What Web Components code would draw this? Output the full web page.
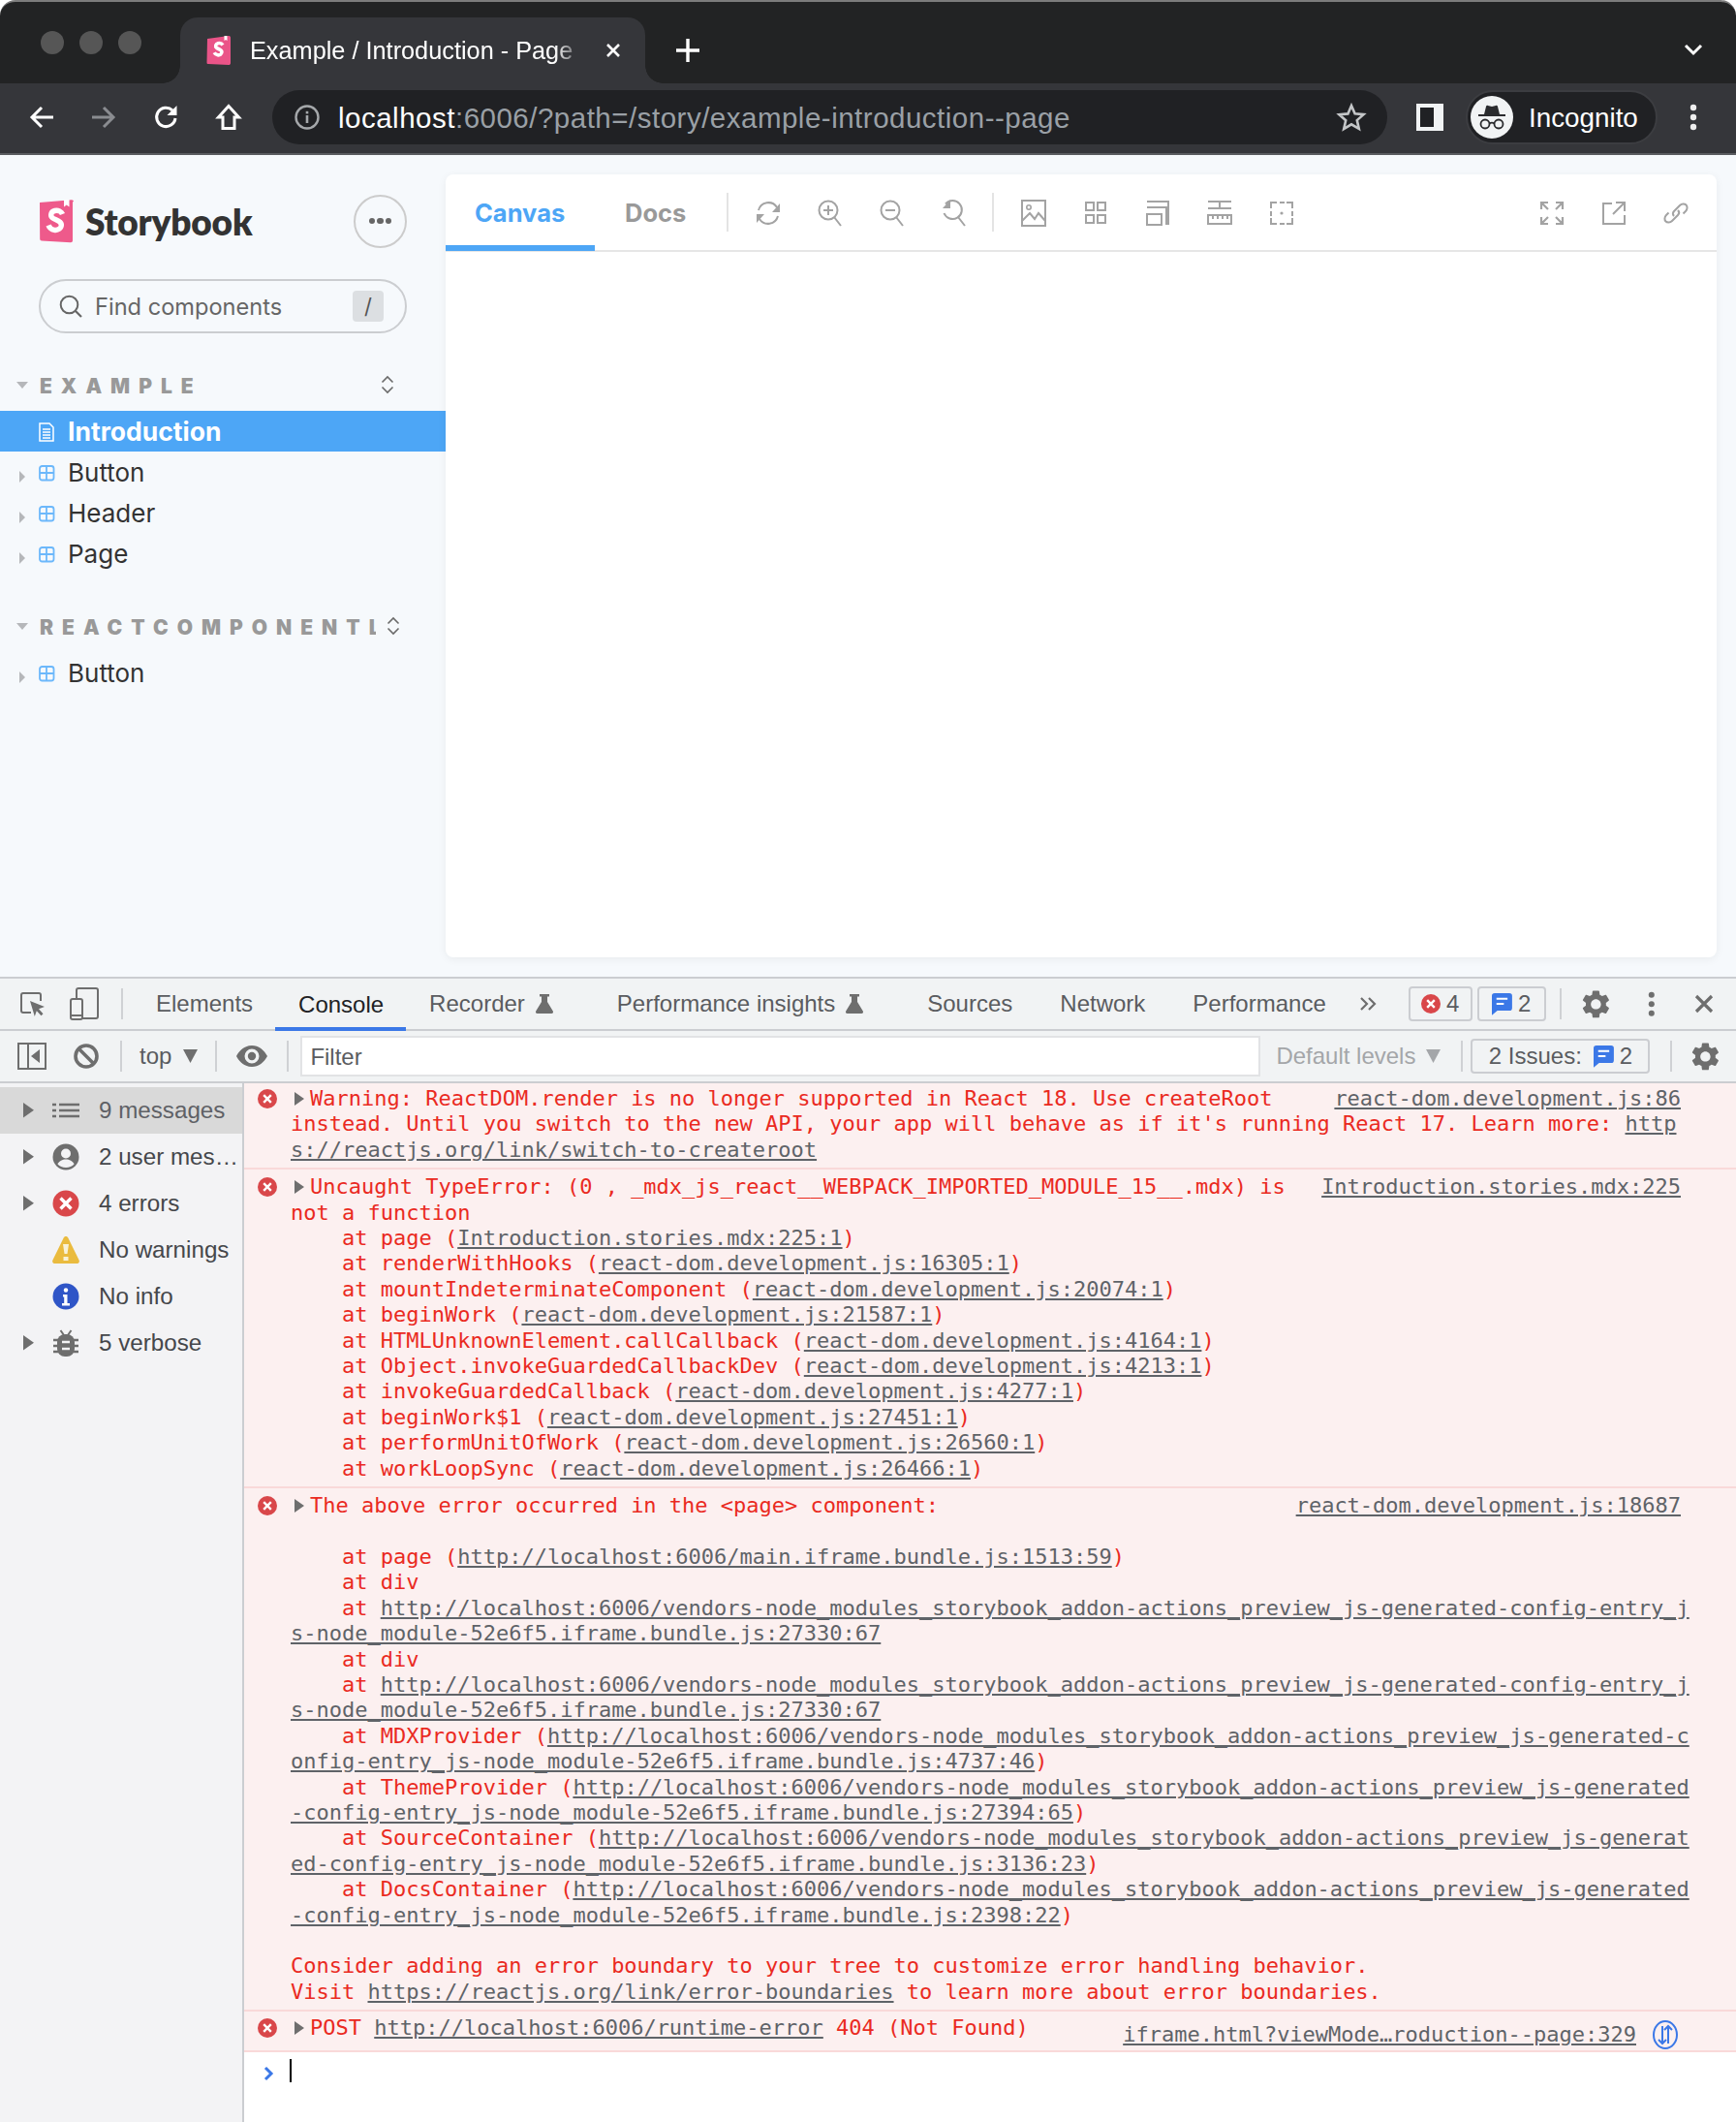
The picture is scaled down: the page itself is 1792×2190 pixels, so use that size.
<!DOCTYPE html>
<html lang="en"><head><meta charset="utf-8"><title>Example / Introduction - Page</title>
<style>
html,body{margin:0;padding:0;background:#fff}
body{width:1792px;height:2190px;overflow:hidden;font-family:"Liberation Sans",sans-serif}
</style></head>
<body>
<app-root></app-root>

<script>
const G='#6e6e6e', P='#a3a3a3';
const s=(d,c='currentColor',w=2)=>`<path d="${d}" fill="none" stroke="${c}" stroke-width="${w}"/>`;
const f=(d,c='currentColor')=>`<path d="${d}" fill="${c}"/>`;
const GEAR="M19.14 12.94c.04-.3.06-.61.06-.94 0-.32-.02-.64-.07-.94l2.03-1.58c.18-.14.23-.41.12-.61l-1.92-3.32c-.12-.22-.37-.29-.59-.22l-2.39.96c-.5-.38-1.03-.7-1.62-.94l-.36-2.54c-.04-.24-.24-.41-.48-.41h-3.84c-.24 0-.43.17-.47.41l-.36 2.54c-.59.24-1.13.57-1.62.94l-2.39-.96c-.22-.08-.47 0-.59.22L2.74 8.87c-.12.21-.08.47.12.61l2.03 1.58c-.05.3-.09.63-.09.94s.02.64.07.94l-2.03 1.58c-.18.14-.23.41-.12.61l1.92 3.32c.12.22.37.29.59.22l2.39-.96c.5.38 1.03.7 1.62.94l.36 2.54c.05.24.24.41.48.41h3.84c.24 0 .44-.17.47-.41l.36-2.54c.59-.24 1.13-.56 1.62-.94l2.39.96c.22.08.47 0 .59-.22l1.92-3.32c.12-.22.07-.47-.12-.61l-2.01-1.58zM12 15.6c-1.98 0-3.6-1.62-3.6-3.6s1.62-3.6 3.6-3.6 3.6 1.62 3.6 3.6-1.62 3.6-3.6 3.6z";
const ICONS={
 back:[26,24,s("M25 12H4M13 2L3 12l10 10",'currentColor',3)],
 forward:[26,24,s("M1 12h21M13 2l10 10-10 10",'currentColor',3)],
 reload:[26,26,s("M22 14a9.7 9.7 0 1 1-3-8.2",'currentColor',3)+f("M23.5 1v10h-10z")],
 home:[26,28,s("M13 2.5L23.5 14H19v11.5H7V14H2.5z",'currentColor',3)],
 info:[26,26,`<circle cx="13" cy="13" r="11.5" fill="none" stroke="currentColor" stroke-width="2.4"/><rect x="11.7" y="11" width="2.6" height="8" fill="currentColor"/><rect x="11.7" y="6.8" width="2.6" height="2.6" fill="currentColor"/>`],
 star:[30,30,s("M15 3l3.6 8.3 9 .8-6.8 6 2 8.8L15 22.3 7.2 27l2-8.8-6.8-6 9-.8z",'currentColor',2.6)],
 panel:[28,28,`<rect width="28" height="28" fill="#f1f3f4"/><rect x="4" y="4" width="14" height="20" fill="#202124"/>`],
 incog:[44,44,`<circle cx="22" cy="22" r="22" fill="#f1f3f4"/><path d="M14 19l2-8c.2-1 1-1.4 2-1l4 1 4-1c1-.4 1.800 0 2 1l2 8z" fill="#2a2b2e"/><rect x="8" y="19" width="28" height="2" fill="#2a2b2e"/><circle cx="15" cy="29" r="4.500" fill="none" stroke="#2a2b2e" stroke-width="1.800"/><circle cx="29" cy="29" r="4.500" fill="none" stroke="#2a2b2e" stroke-width="1.800"/><path d="M19.500 28.500c1.500-1 3.500-1 5 0" fill="none" stroke="#2a2b2e" stroke-width="1.800"/>`],
 kebab:[8,28,`<circle cx="4" cy="4" r="3.200" fill="currentColor"/><circle cx="4" cy="14" r="3.200" fill="currentColor"/><circle cx="4" cy="24" r="3.200" fill="currentColor"/>`],
 chev:[20,12,s("M2 2l8 8 8-8",'currentColor',3)],
 plus:[24,24,s("M12 0v24M0 12h24",'currentColor',3.400)],
 tabx:[16,16,s("M2 2l12 12M14 2L2 14",'currentColor',2.600)],
 favicon:[25,30,`<path d="M1 3l22-3c1 0 2 .5 2 2v26c0 1.500-1 2-2 2L2 29c-1 0-1.500-.5-1.500-1.500z" fill="#ea5488"/>`+s("M17 9.500c-1-1.600-3-2.300-5-1.800-2.400.6-3.200 3.200-1.400 4.700 1.600 1.300 4.800 1.500 5.300 4 .4 2.300-2 3.800-4.200 3.400-1.700-.3-2.800-1.200-3.500-2.600",'#fff',3.600)+`<path d="M18.500 0h3v5l-1.500-1-1.500 1z" fill="#fff"/>`],
 logo:[36,44,`<path d="M1 3L34 .2c1 0 2 .8 2 2l-1 0v40c0 1-.8 2-2 2L3 42.500c-1 0-1.800-.8-1.800-2z" fill="#ee5a8b"/>`+s("M24.500 15c-1-2.800-4.500-4.300-8-3.500-4 1-5 5.300-2.200 7.500 2.600 2.100 8.400 2.400 9 6.500.5 4-3.500 6.500-7.300 5.800-3-.5-5-2.300-6-4.800",'#fff',5.400)+`<path d="M26 0h5.500v7.500L28.700 5.500 26 7.500z" fill="#fff"/>`],
 search:[24,24,`<circle cx="10.500" cy="10.500" r="8.800" fill="none" stroke="currentColor" stroke-width="2"/>`+s("M17 17l6 6",'currentColor',2.200)],
 sort:[14,20,s("M1.500 7.500L7 2l5.500 5.500M1.500 12.500L7 18l5.500-5.500",'currentColor',1.600)],
 caretd:[12,7,f("M0 0h12L6 7z")],
 caretr:[6,12,f("M0 0l6 6-6 6z")],
 tri:[10,14,f("M0 0l10 7-10 7z")],
 doc:[16,20,s("M1 1h10l4 4v14H1z",'currentColor',1.500)+s("M4 7h8M4 10h8M4 13h8M4 16h8",'currentColor',1.500)],
 comp:[16,16,`<rect x="1" y="1" width="14.500" height="14.500" rx="2.500" fill="none" stroke="currentColor" stroke-width="1.800"/>`+s("M8 1v14M1 8h14",'currentColor',1.800)],
 sync:[26,28,s("M3 11a10.500 10.500 0 0 1 19-3M23 17a10.500 10.500 0 0 1-19 3",'currentColor',2)+f("M25 4v9h-8zM1 24v-9h8z")],
 zoomin:[26,28,`<circle cx="11" cy="11" r="9.500" fill="none" stroke="currentColor" stroke-width="2"/>`+s("M17 18l7 9M6 11h10M11 6v10",'currentColor',2)],
 zoomout:[26,28,`<circle cx="11" cy="11" r="9.500" fill="none" stroke="currentColor" stroke-width="2"/>`+s("M17 18l7 9M6 11h10",'currentColor',2)],
 zoomre:[26,28,s("M4 4.500A9.500 9.500 0 1 1 2.500 14M17 18l7 9",'currentColor',2)+f("M9 0v9H1z")],
 img:[26,28,s("M1 1h24v26H1z",'currentColor',2)+`<circle cx="8" cy="8" r="2.200" fill="none" stroke="currentColor" stroke-width="1.600"/>`+s("M1 22l8-8 5 6 4-6 7 8",'currentColor',2)],
 grid:[22,24,s("M1 1h8v8H1zM13 1h8v8h-8zM1 14h8v8H1zM13 14h8v8h-8z",'currentColor',2)],
 outline:[24,26,s("M1 14h15v11H1zM1 7h20v18M1 1h22v24",'currentColor',2)],
 ruler:[26,26,s("M1 1h24M1 8h24M13 1v7",'currentColor',2)+s("M1 15h24v9H1z",'currentColor',2)+s("M6 15v4M11 15v4M16 15v4M21 15v4",'currentColor',2)],
 dashed:[24,24,s("M1 7V1h6M10 1h5M17 1h6v6M23 10v5M23 17v6h-6M15 23h-5M7 23H1v-6M1 15v-5",'currentColor',2)+`<circle cx="12" cy="12" r="1.600" fill="currentColor"/>`],
 expand:[24,24,s("M1 8V1h7M23 8V1h-7M1 16v7h7M23 16v7h-7M2 2l6 6M22 2l-6 6M2 22l6-6M22 22l-6-6",'currentColor',2.200)],
 open:[24,24,s("M10 2H1v21h22v-9M14 1h9v9M23 1L11 13",'currentColor',2)],
 link:[26,26,s("M11 16c-1.500-1.500-1.500-3.500 0-5l6-6c2-2 5-2 6.500-.5s1.500 4.500-.5 6.500l-2.500 2.500M15 10c1.500 1.500 1.500 3.500 0 5l-6 6c-2 2-5 2-6.500.5S1 17 3 15l2.500-2.500",'currentColor',2)],
 inspect:[26,26,s("M12 22H4a2 2 0 0 1-2-2V4a2 2 0 0 1 2-2h16a2 2 0 0 1 2 2v6",'currentColor',2)+f("M11 10l15 6-6 2.200 4.500 5-2 2-4.700-5-2 5.800z")],
 device:[30,34,`<rect x="7" y="1" width="22" height="31" rx="2" fill="none" stroke="currentColor" stroke-width="2"/><rect x="1" y="12" width="12" height="21" rx="2" fill="#f1f3f4" stroke="currentColor" stroke-width="2"/><path d="M1 29h12" stroke="currentColor" stroke-width="2"/>`],
 flask:[18,20,f("M4 0h10v2.500h-2V8l5.800 9.500c.6 1.200 0 2.500-1.500 2.500H1.700C.2 20-.4 18.700.2 17.500L6 8V2.500H4z")],
 more:[18,16,s("M2 2l6 6-6 6M10 2l6 6-6 6",'currentColor',2.200)],
 gear:[24,24,f(GEAR)],
 close:[20,20,s("M2 2l16 16M18 2L2 18",'currentColor',3.200)],
 err:[20,20,`<circle cx="10" cy="10" r="10" fill="#d9474a"/>`+s("M6.200 6.200l7.600 7.600M13.800 6.200l-7.600 7.600",'#fff',2.400)],
 errbig:[28,28,`<circle cx="14" cy="14" r="13.500" fill="#d9474a"/>`+s("M8.500 8.500l11 11M19.500 8.500l-11 11",'#fff',3.400)],
 issue:[22,24,`<path d="M3 0h16a3 3 0 0 1 3 3v13a3 3 0 0 1-3 3H6l-6 5V3a3 3 0 0 1 3-3z" fill="#3b78e7"/><path d="M5 6h12M5 11.500h8" stroke="#fff" stroke-width="2.200"/>`],
 sidebar:[30,28,s("M1 1h28v26H1zM11 1v26",'currentColor',2)+f("M23 7v14L14 14z")],
 block:[26,26,`<circle cx="13" cy="13" r="11" fill="none" stroke="currentColor" stroke-width="3.600"/>`+s("M5.500 5.500l15 15",'currentColor',3.600)],
 eye:[32,22,f("M16 0C9 0 3.500 4.500 0 11c3.500 6.500 9 11 16 11s12.500-4.500 16-11C28.500 4.500 23 0 16 0zm0 18.500a7.500 7.500 0 1 1 0-15 7.500 7.500 0 0 1 0 15z")+`<circle cx="16" cy="11" r="4.200" fill="currentColor"/>`],
 down:[15,14,f("M0 0h15L7.500 14z")],
 list:[28,16,s("M0 2h4M7 2h21M0 8h4M7 8h21M0 14h4M7 14h21",'currentColor',2.600)],
 user:[28,28,`<circle cx="14" cy="14" r="13.500" fill="currentColor"/><circle cx="14" cy="10.500" r="5" fill="#f3f3f5"/><path d="M5.500 21.500c1.500-3.500 5-5 8.500-5s7 1.500 8.500 5c-2 2.300-5 3.500-8.500 3.500s-6.500-1.200-8.500-3.500z" fill="#f3f3f5"/>`],
 warn:[28,28,`<path d="M14 0c1 0 1.800.5 2.300 1.500l11.300 23c.8 1.600 0 3.500-2 3.500H2.400c-2 0-2.800-1.900-2-3.500l11.300-23C12.200.5 13 0 14 0z" fill="#eabb3f"/><path d="M11 8h6l-1.500 10h-3zM11.500 21h5v4h-5z" fill="#f8f1d8"/>`],
 infob:[28,28,`<circle cx="14" cy="14" r="13.500" fill="#2f55c7"/><path d="M11 12h4.500v9H18v2.500h-8V21h2.200v-6.500H11z" fill="#fff"/><circle cx="14" cy="7.500" r="2.200" fill="#fff"/>`],
 bug:[26,28,s("M7.500 1l3.500 5M18.500 1L15 6",'currentColor',2)+`<rect x="4" y="5" width="18" height="23" rx="8" fill="currentColor"/><path d="M0 11h26M0 17h26M0 23h26" stroke="currentColor" stroke-width="2.400"/><path d="M9 13h8M9 20h8" stroke="#f3f3f5" stroke-width="2.400"/>`],
 net:[26,30,`<ellipse cx="13" cy="15" rx="12" ry="14" fill="none" stroke="#3b78e7" stroke-width="2"/>`+s("M10 6v18M6 20l4 4 4-4M16 24V6M12 10l4-4 4 4",'#3b78e7',2)],
 prompt:[12,16,s("M2 2l6 6-6 6",'#3b78e7',3)]
};
function def(name,css,html){
  customElements.define(name,class extends HTMLElement{
    constructor(){super();this.attachShadow({mode:'open'});}
    connectedCallback(){
      if(this._done)return;this._done=1;
      const t=document.createElement('template');
      t.innerHTML=`<style>${css}</style>`+(typeof html==='function'?html(this):html);
      this.shadowRoot.appendChild(t.content);
    }
  });
}
customElements.define('x-icon',class extends HTMLElement{
  connectedCallback(){
    if(this.shadowRoot)return;
    const r=this.attachShadow({mode:'open'});
    const [w,h,b]=ICONS[this.getAttribute('name')];
    const sc=parseFloat(this.getAttribute('scale')||1);
    r.innerHTML=`<style>:host{display:inline-flex;flex:none;line-height:0}svg{display:block;overflow:visible}</style><svg width="${w*sc}" height="${h*sc}" viewBox="0 0 ${w} ${h}">${b}</svg>`;
  }
});
def('src-link',`:host{display:inline;color:#5f6368;text-decoration:underline}`,`<slot></slot>`);

/* ---------- browser chrome ---------- */
def('browser-chrome',`
:host{display:block;height:160px;font-family:"Liberation Sans",sans-serif;color:#fff}
.tabs{height:86px;box-sizing:border-box;background:#222324;border-top:2px solid #7c7c7c;border-radius:16px 16px 0 0;display:flex;align-items:flex-end;padding-left:42px}
.dots{display:flex;gap:16px;align-self:flex-start;margin-top:30px}
.dots i{width:24px;height:24px;border-radius:50%;background:#565656}
.tab{position:relative;margin-left:40px;width:480px;height:68px;background:#35363a;border-radius:18px 18px 0 0;display:flex;align-items:center;padding-left:27px;box-sizing:border-box}
.tab:before,.tab:after{content:"";position:absolute;bottom:0;width:18px;height:18px}
.tab:before{left:-18px;background:radial-gradient(circle at 0 0,#222324 17.5px,#35363a 18px)}
.tab:after{right:-18px;background:radial-gradient(circle at 100% 0,#222324 17.5px,#35363a 18px)}
.title{margin-left:20px;width:350px;font-size:25.300px;white-space:nowrap;overflow:hidden;-webkit-mask-image:linear-gradient(90deg,#000 90%,transparent 98%);mask-image:linear-gradient(90deg,#000 90%,transparent 98%)}
.tabx{margin-left:17px}
.plus{margin-left:32px;margin-bottom:22px}
.end{margin-left:auto;margin-right:34px;margin-bottom:29px}
.bar{height:74px;box-sizing:border-box;background:#35363a;border-bottom:2px solid #595b5f;display:flex;align-items:center;padding-left:11px;padding-bottom:2px}
.btn{width:64px;display:flex;justify-content:center;align-items:center}
.omni{margin-left:14px;width:1151px;height:56px;box-sizing:border-box;background:#202124;border-radius:28px;display:flex;align-items:center;padding-left:23px;padding-right:22px;font-size:29.500px;letter-spacing:.5px;color:#9aa0a6;white-space:nowrap}
.omni b{font-weight:400;color:#fff}
.url{margin-left:19px;flex:1;padding-top:2px}
.panel{margin-left:30px}
.pill{margin-left:23px;width:198px;height:56px;box-sizing:border-box;background:#202124;border:2px solid #3c3d41;border-radius:28px;display:flex;align-items:center;padding-left:3px;font-size:27.800px}
.pill span{margin-left:16px;padding-top:2px}
.keb{margin-left:33px}
`,`
<div class="tabs">
 <div class="dots"><i></i><i></i><i></i></div>
 <div class="tab"><x-icon name="favicon"></x-icon><div class="title">Example / Introduction - Page</div><x-icon class="tabx" name="tabx"></x-icon></div>
 <x-icon class="plus" name="plus"></x-icon>
 <x-icon class="end" name="chev"></x-icon>
</div>
<div class="bar">
 <div class="btn"><x-icon name="back"></x-icon></div>
 <div class="btn" style="color:#8a8c90"><x-icon name="forward"></x-icon></div>
 <div class="btn" style="padding-left:2px;box-sizing:border-box"><x-icon name="reload"></x-icon></div>
 <div class="btn" style="padding-left:2px;box-sizing:border-box"><x-icon name="home"></x-icon></div>
 <div class="omni"><x-icon name="info" style="color:#a5a8ab"></x-icon><div class="url"><b>localhost</b>:6006/?path=/story/example-introduction--page</div><x-icon name="star" style="color:#c4c6c8"></x-icon></div>
 <x-icon class="panel" name="panel"></x-icon>
 <div class="pill"><x-icon name="incog"></x-icon><span>Incognito</span></div>
 <x-icon class="keb" name="kebab" style="color:#eee"></x-icon>
</div>`);

/* ---------- storybook sidebar ---------- */
def('sb-group',`
:host{display:block;margin-top:var(--gap,0);color:#999;font-family:Inter,sans-serif}
.h{height:42px;margin-bottom:6px;display:flex;align-items:center;padding-left:17px}
.l{width:347px;margin-left:12px;overflow:hidden;white-space:nowrap;font-size:21px;font-weight:900;letter-spacing:var(--ls,9px);flex:none;padding-top:2px}
.s{margin-left:var(--sm,5px);color:#6a6a6a}
`,h=>`<div class="h"><x-icon name="caretd" style="color:#b5b7ba"></x-icon><div class="l">${h.getAttribute('label')}</div><x-icon class="s" name="sort"></x-icon></div><slot></slot>`);
def('sb-item',`
:host{display:flex;height:42px;align-items:center;padding-left:20px;font:400 26px Inter,sans-serif;color:#333;--c:#6cb8fb}
:host([selected]){background:#4da6f6;color:#fff;font-weight:700;font-size:26.500px;--c:#fff}
.t{width:20px;color:#b5b7ba;margin-top:2px}
.i{width:30px;color:var(--c);display:flex;margin-top:2px}
`,h=>`<div class="t">${h.hasAttribute('selected')?'':'<x-icon name="caretr"></x-icon>'}</div><div class="i"><x-icon name="${h.getAttribute('icon')||'comp'}"></x-icon></div><slot></slot>`);
def('sb-sidebar',`
:host{display:block;width:460px;flex:none;box-sizing:border-box;padding-top:41px;font-family:Inter,sans-serif}
.head{display:flex;align-items:center;justify-content:space-between;margin:0 40px;height:54px}
.brand{display:flex;align-items:center;gap:12px;font:800 37px Lato,sans-serif;color:#333;letter-spacing:-.2px}
.menu{width:55px;height:55px;box-sizing:border-box;border:2px solid #ccc;border-radius:50%;display:flex;align-items:center;justify-content:center;gap:2px}
.menu i{width:6.500px;height:6.500px;border-radius:50%;background:#666}
.search{margin:33px 40px 32px;height:56px;box-sizing:border-box;border:2px solid #cbcdd0;border-radius:28px;display:flex;align-items:center;padding:0 22px 0 19px;color:#666;font-size:23.600px}
.search span{margin-left:13px;flex:1}
.key{width:32px;height:32px;background:#dcdfe2;border-radius:4px;text-align:center;line-height:32px;font-size:22px;color:#555}
`,`
<div class="head"><div class="brand"><x-icon name="logo"></x-icon><span>Storybook</span></div><div class="menu"><i></i><i></i><i></i></div></div>
<div class="search"><x-icon name="search"></x-icon><span>Find components</span><div class="key">/</div></div>
<sb-group label="EXAMPLE">
 <sb-item selected icon="doc">Introduction</sb-item>
 <sb-item>Button</sb-item><sb-item>Header</sb-item><sb-item>Page</sb-item>
</sb-group>
<sb-group label="REACTCOMPONENTLIBRARY" style="--gap:33px;--sm:11px"><sb-item>Button</sb-item></sb-group>`);

/* ---------- storybook preview ---------- */
def('sb-preview',`
:host{display:block;flex:1;margin:20px 20px 20px 0;background:#fff;border-radius:8px;box-shadow:0 2px 10px rgba(0,0,0,.06);font-family:Inter,sans-serif;overflow:hidden}
.bar{height:80px;box-sizing:border-box;border-bottom:2px solid #e6e6e6;display:flex;align-items:center;padding-right:10px;padding-top:2px;color:${P}}
.tab{height:80px;margin-top:-2px;box-sizing:border-box;padding:0 30px;display:flex;align-items:center;font-size:25.500px;font-weight:700;color:#999}
.tab.on{color:#4da6f6;border-bottom:6px solid #4da6f6;padding-top:6px;width:154px}
.tab.d{padding-left:31px;padding-right:28px}
.sep{width:2px;height:40px;background:#e4e4e4;flex:none;margin-top:-2px}
.b{width:64px;display:flex;justify-content:center;flex:none}
.sp{margin-left:auto}
`,`
<div class="bar">
 <div class="tab on">Canvas</div><div class="tab d">Docs</div>
 <div class="sep" style="margin-left:14px;margin-right:9px"></div>
 <div class="b"><x-icon name="sync"></x-icon></div><div class="b"><x-icon name="zoomin"></x-icon></div><div class="b"><x-icon name="zoomout"></x-icon></div><div class="b"><x-icon name="zoomre"></x-icon></div>
 <div class="sep" style="margin-left:7px;margin-right:9px"></div>
 <div class="b"><x-icon name="img"></x-icon></div><div class="b"><x-icon name="grid"></x-icon></div><div class="b"><x-icon name="outline"></x-icon></div><div class="b"><x-icon name="ruler"></x-icon></div><div class="b"><x-icon name="dashed"></x-icon></div>
 <div class="b sp"><x-icon name="expand"></x-icon></div><div class="b"><x-icon name="open"></x-icon></div><div class="b"><x-icon name="link"></x-icon></div>
</div>`);
def('sb-layout',`:host{display:flex;height:848px;background:#f6f9fc}`,`<sb-sidebar></sb-sidebar><sb-preview></sb-preview>`);

/* ---------- devtools ---------- */
def('dt-tabs',`
:host{display:flex;height:56px;box-sizing:border-box;background:#f1f3f4;border-top:2px solid #cbcdd1;border-bottom:2px solid #cbcdd1;align-items:center;font-size:24px;color:#5a5c60;white-space:nowrap}
.tab{height:52px;box-sizing:border-box;padding:0 24px;display:flex;align-items:center;gap:11px}
.on{color:#202124;border-bottom:4px solid #3b78e7;padding-top:4px;margin-bottom:-2px;height:54px}
.sep{width:2px;height:32px;background:#cfd1d4;margin-left:23px;margin-right:10px}
.pad{margin-right:18px}
.cnt{height:36px;box-sizing:border-box;border:2px solid #cbcdd1;border-radius:4px;display:flex;align-items:center;gap:6px;justify-content:center}
`,`
<x-icon name="inspect" style="margin-left:20px;color:${G}"></x-icon>
<x-icon name="device" style="margin-left:26px;color:${G}"></x-icon>
<div class="sep"></div>
<div class="tab" style="padding-right:23px">Elements</div><div class="tab on" style="padding-right:23px">Console</div>
<div class="tab pad">Recorder<x-icon name="flask" style="color:${G}"></x-icon></div>
<div class="tab pad">Performance insights<x-icon name="flask" style="color:${G}"></x-icon></div>
<div class="tab" style="padding-right:25px">Sources</div><div class="tab" style="padding-right:25px">Network</div><div class="tab">Performance</div>
<x-icon name="more" style="margin-left:10px;color:${G}"></x-icon>
<div class="cnt" style="width:66px;margin-left:33px"><x-icon name="err"></x-icon>4</div>
<div class="cnt" style="width:71px;margin-left:5px"><x-icon name="issue" scale=".95"></x-icon>2</div>
<div class="sep" style="margin-left:14px;margin-right:18px"></div>
<x-icon name="gear" scale="1.450" style="color:${G}"></x-icon>
<x-icon name="kebab" scale=".95" style="margin-left:36px;color:${G}"></x-icon>
<x-icon name="close" style="margin-left:41px;color:${G}"></x-icon>`);
def('dt-toolbar',`
:host{display:flex;height:54px;box-sizing:border-box;background:#f1f3f4;border-bottom:2px solid #cbcdd1;align-items:center;font-size:24px;color:#5a5c60;white-space:nowrap}
.sep{width:2px;height:32px;background:#cfd1d4;flex:none}
.filter{width:991px;height:42px;box-sizing:border-box;background:#fff;border:2px solid #e2e3e5;padding-left:8px;line-height:40px;margin-left:12px}
.lv{color:#a4a6a9;margin-left:16px;display:flex;align-items:center;gap:11px}
.iss{width:185px;height:36px;box-sizing:border-box;border:2px solid #cbcdd1;border-radius:4px;display:flex;align-items:center;justify-content:center;gap:6px;margin-left:8px}
`,`
<x-icon name="sidebar" style="margin-left:18px;color:${G}"></x-icon>
<x-icon name="block" style="margin-left:28px;color:${G}"></x-icon>
<div class="sep" style="margin-left:22px;margin-right:18px"></div>
<span>top</span><x-icon name="down" style="margin-left:12px;color:${G}"></x-icon>
<div class="sep" style="margin-left:18px;margin-right:20px"></div>
<x-icon name="eye" style="color:${G}"></x-icon>
<div class="sep" style="margin-left:20px"></div>
<div class="filter">Filter</div>
<div class="lv">Default levels<x-icon name="down" style="color:#a4a6a9"></x-icon></div>
<div class="sep" style="margin-left:21px"></div>
<div class="iss">2 Issues:<x-icon name="issue" scale=".95" style="margin-left:6px"></x-icon>2</div>
<div class="sep" style="margin-left:21px;margin-right:17px"></div>
<x-icon name="gear" scale="1.450" style="color:${G}"></x-icon>`);
def('cons-filter',`
:host{display:flex;height:48px;align-items:center;font-size:24.200px;color:#45474b;white-space:nowrap;overflow:hidden}
:host([selected]){background:#d9d9d9;color:#5f6166}
.t{width:24px;margin-left:24px;color:${G};display:flex}
.i{width:28px;margin-left:6px;display:flex;justify-content:center;color:${G}}
.x{margin-left:20px}
`,h=>`<div class="t">${h.hasAttribute('exp')?'<x-icon name="tri" scale="1.100"></x-icon>':''}</div><div class="i"><x-icon name="${h.getAttribute('icon')}"></x-icon></div><div class="x"><slot></slot></div>`);
def('dt-sidebar',`:host{display:block;width:250px;flex:none;box-sizing:border-box;padding-top:4px;background:#f3f3f5}`,`
<cons-filter exp selected icon="list">9 messages</cons-filter>
<cons-filter exp icon="user">2 user mes…</cons-filter>
<cons-filter exp icon="errbig">4 errors</cons-filter>
<cons-filter icon="warn">No warnings</cons-filter>
<cons-filter icon="infob">No info</cons-filter>
<cons-filter exp icon="bug">5 verbose</cons-filter>`);
/* one console line; the first line of a message carries the expander and the source link */
def('c-l',`
:host{display:block;white-space:pre;min-height:26.400px}
.tr{display:inline-block;width:20px;color:${G}}
.src{float:right;margin-right:57px;color:#5f6368;text-decoration:underline}
`,h=>(h.getAttribute('src')?`<span class="src">${h.getAttribute('src')}</span>`:'')+(h.hasAttribute('first')?`<span class="tr"><x-icon name="tri" style="margin-left:4px"></x-icon></span>`:'')+`<slot></slot>`);
def('console-msg',`
:host{display:flex;background:#fcf0f0;border-bottom:2px solid #f9d9d9;color:#ea2a1f;font:22px/26.400px "DejaVu Sans Mono",monospace;box-sizing:border-box;padding:5px 0 5px 14px}
:host([top]){padding-top:3px}
.e{width:34px;flex:none;padding-top:3px}
.c{flex:1;min-width:0}
`,`<div class="e"><x-icon name="err"></x-icon></div><div class="c"><slot></slot></div>`);
def('console-post',`
:host{display:flex;height:42px;box-sizing:border-box;background:#fcf0f0;border-bottom:2px solid #f9d9d9;color:#ea2a1f;font:22px/26.400px "DejaVu Sans Mono",monospace;padding-left:14px;white-space:pre}
.e{width:34px;flex:none;padding-top:7px}
.tr{display:inline-block;width:20px}
.m{padding-top:4px;flex:1}
.src{color:#5f6368;text-decoration:underline;padding-top:11px}
.n{margin:9px 60px 0 17px}
`,`<div class="e"><x-icon name="err"></x-icon></div><div class="m"><span class="tr"><x-icon name="tri" style="margin-left:4px;color:${G}"></x-icon></span><slot></slot></div><div class="src">iframe.html?viewMode…roduction--page:329</div><x-icon class="n" name="net"></x-icon>`);
def('console-prompt',`
:host{display:flex;padding:10px 0 0 20px;align-items:flex-start}
.c{width:2px;height:24px;background:#000;margin-left:15px;margin-top:-3px}
`,`<x-icon name="prompt" style="margin-top:4px"></x-icon><div class="c"></div>`);
def('dev-tools',`
:host{display:block;height:1182px;background:#fff}
.body{display:flex;height:1072px}
.main{flex:1;min-width:0;border-left:2px solid #cbcdd1}
`,`<dt-tabs></dt-tabs><dt-toolbar></dt-toolbar>
<div class="body"><dt-sidebar></dt-sidebar><div class="main"><slot></slot></div></div>`);
def('app-root',`:host{display:block;width:1792px;height:2190px}`,`
<browser-chrome></browser-chrome><sb-layout></sb-layout>
<dev-tools>
<console-msg top>
<c-l first src="react-dom.development.js:86">Warning: ReactDOM.render is no longer supported in React 18. Use createRoot</c-l>
<c-l>instead. Until you switch to the new API, your app will behave as if it's running React 17. Learn more: <src-link>http</src-link></c-l>
<c-l><src-link>s://reactjs.org/link/switch-to-createroot</src-link></c-l>
</console-msg>
<console-msg>
<c-l first src="Introduction.stories.mdx:225">Uncaught TypeError: (0 , _mdx_js_react__WEBPACK_IMPORTED_MODULE_15__.mdx) is</c-l>
<c-l>not a function</c-l>
<c-l>    at page (<src-link>Introduction.stories.mdx:225:1</src-link>)</c-l>
<c-l>    at renderWithHooks (<src-link>react-dom.development.js:16305:1</src-link>)</c-l>
<c-l>    at mountIndeterminateComponent (<src-link>react-dom.development.js:20074:1</src-link>)</c-l>
<c-l>    at beginWork (<src-link>react-dom.development.js:21587:1</src-link>)</c-l>
<c-l>    at HTMLUnknownElement.callCallback (<src-link>react-dom.development.js:4164:1</src-link>)</c-l>
<c-l>    at Object.invokeGuardedCallbackDev (<src-link>react-dom.development.js:4213:1</src-link>)</c-l>
<c-l>    at invokeGuardedCallback (<src-link>react-dom.development.js:4277:1</src-link>)</c-l>
<c-l>    at beginWork$1 (<src-link>react-dom.development.js:27451:1</src-link>)</c-l>
<c-l>    at performUnitOfWork (<src-link>react-dom.development.js:26560:1</src-link>)</c-l>
<c-l>    at workLoopSync (<src-link>react-dom.development.js:26466:1</src-link>)</c-l>
</console-msg>
<console-msg>
<c-l first src="react-dom.development.js:18687">The above error occurred in the &lt;page&gt; component:</c-l>
<c-l></c-l>
<c-l>    at page (<src-link>http://localhost:6006/main.iframe.bundle.js:1513:59</src-link>)</c-l>
<c-l>    at div</c-l>
<c-l>    at <src-link>http://localhost:6006/vendors-node_modules_storybook_addon-actions_preview_js-generated-config-entry_j</src-link></c-l>
<c-l><src-link>s-node_module-52e6f5.iframe.bundle.js:27330:67</src-link></c-l>
<c-l>    at div</c-l>
<c-l>    at <src-link>http://localhost:6006/vendors-node_modules_storybook_addon-actions_preview_js-generated-config-entry_j</src-link></c-l>
<c-l><src-link>s-node_module-52e6f5.iframe.bundle.js:27330:67</src-link></c-l>
<c-l>    at MDXProvider (<src-link>http://localhost:6006/vendors-node_modules_storybook_addon-actions_preview_js-generated-c</src-link></c-l>
<c-l><src-link>onfig-entry_js-node_module-52e6f5.iframe.bundle.js:4737:46</src-link>)</c-l>
<c-l>    at ThemeProvider (<src-link>http://localhost:6006/vendors-node_modules_storybook_addon-actions_preview_js-generated</src-link></c-l>
<c-l><src-link>-config-entry_js-node_module-52e6f5.iframe.bundle.js:27394:65</src-link>)</c-l>
<c-l>    at SourceContainer (<src-link>http://localhost:6006/vendors-node_modules_storybook_addon-actions_preview_js-generat</src-link></c-l>
<c-l><src-link>ed-config-entry_js-node_module-52e6f5.iframe.bundle.js:3136:23</src-link>)</c-l>
<c-l>    at DocsContainer (<src-link>http://localhost:6006/vendors-node_modules_storybook_addon-actions_preview_js-generated</src-link></c-l>
<c-l><src-link>-config-entry_js-node_module-52e6f5.iframe.bundle.js:2398:22</src-link>)</c-l>
<c-l></c-l>
<c-l>Consider adding an error boundary to your tree to customize error handling behavior.</c-l>
<c-l>Visit <src-link>https://reactjs.org/link/error-boundaries</src-link> to learn more about error boundaries.</c-l>
</console-msg>
<console-post>POST <src-link>http://localhost:6006/runtime-error</src-link> 404 (Not Found)</console-post>
<console-prompt></console-prompt>
</dev-tools>`);
</script>
</body></html>
